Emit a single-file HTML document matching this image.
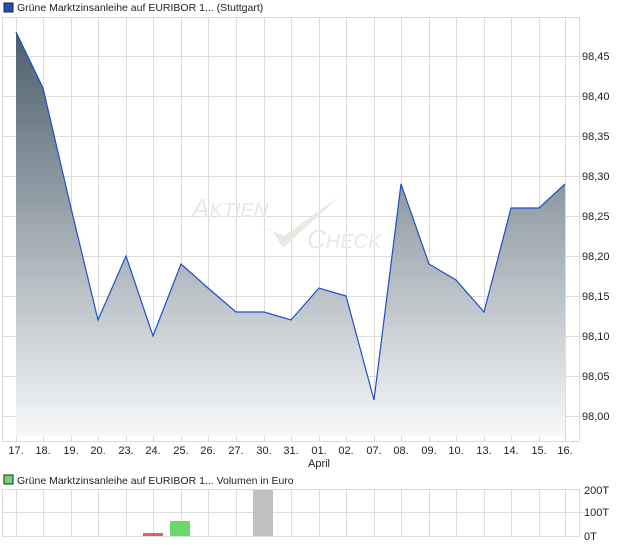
<!DOCTYPE html>
<html><head><meta charset="utf-8"><style>
body{margin:0;width:620px;height:546px;background:#fff;font-family:"Liberation Sans",sans-serif;overflow:hidden}
</style></head><body>
<svg width="620" height="546" xmlns="http://www.w3.org/2000/svg" font-family="Liberation Sans, sans-serif">
<defs><linearGradient id="g" x1="0" y1="32" x2="0" y2="436" gradientUnits="userSpaceOnUse">
<stop offset="0" stop-color="#4b5f6c"/><stop offset="1" stop-color="#f7f8f9"/></linearGradient></defs>
<rect x="4" y="3" width="9" height="9" fill="#1f4fb8" stroke="#222" stroke-width="1"/>
<text x="17" y="11" font-size="10.5" fill="#222">Grüne Marktzinsanleihe auf EURIBOR 1... (Stuttgart)</text>
<g stroke="#dcdcdc" stroke-width="1">
<rect x="2.5" y="17.5" width="577" height="424" fill="#fff"/>
<path d="M16.5 18V441M43.5 18V441M71.5 18V441M98.5 18V441M126.5 18V441M153.5 18V441M181.5 18V441M208.5 18V441M236.5 18V441M264.5 18V441M291.5 18V441M319.5 18V441M346.5 18V441M374.5 18V441M401.5 18V441M429.5 18V441M456.5 18V441M484.5 18V441M511.5 18V441M539.5 18V441M565.5 18V441"/>
<path d="M3 56.5H585M3 96.5H585M3 136.5H585M3 176.5H585M3 216.5H585M3 256.5H585M3 296.5H585M3 336.5H585M3 376.5H585M3 416.5H585"/>
</g>
<g fill="#ebe7e3" font-style="italic" font-size="26">
<text x="192" y="217">A<tspan font-size="20">KTIEN</tspan></text>
<text x="307" y="248">C<tspan font-size="20">HECK</tspan></text>
</g>
<path d="M256 224 L272 230 L283 248 L340 196 L284 236 Z" fill="#ebe7e3"/>
<path d="M16 32 L43 88 L71 208 L98 320 L126 256 L153 336 L181 264 L208 288 L236 312 L264 312 L291 320 L319 288 L346 296 L374 400 L401 184 L429 264 L456 280 L484 312 L511 208 L539 208 L565 184 L565 436 L16 436 Z" fill="url(#g)"/>
<path d="M16 32 L43 88 L71 208 L98 320 L126 256 L153 336 L181 264 L208 288 L236 312 L264 312 L291 320 L319 288 L346 296 L374 400 L401 184 L429 264 L456 280 L484 312 L511 208 L539 208 L565 184" fill="none" stroke="#1f4fc8" stroke-width="1.2"/>
<g font-size="11" fill="#222">
<text x="582" y="60">98,45</text><text x="582" y="100">98,40</text><text x="582" y="140">98,35</text><text x="582" y="180">98,30</text><text x="582" y="220">98,25</text><text x="582" y="260">98,20</text><text x="582" y="300">98,15</text><text x="582" y="340">98,10</text><text x="582" y="380">98,05</text><text x="582" y="420">98,00</text>
</g>
<g font-size="11" fill="#222" text-anchor="middle">
<text x="16" y="454">17.</text><text x="43" y="454">18.</text><text x="71" y="454">19.</text><text x="98" y="454">20.</text><text x="126" y="454">23.</text><text x="153" y="454">24.</text><text x="181" y="454">25.</text><text x="208" y="454">26.</text><text x="236" y="454">27.</text><text x="264" y="454">30.</text><text x="291" y="454">31.</text><text x="319" y="454">01.</text><text x="346" y="454">02.</text><text x="374" y="454">07.</text><text x="401" y="454">08.</text><text x="429" y="454">09.</text><text x="456" y="454">10.</text><text x="484" y="454">13.</text><text x="511" y="454">14.</text><text x="539" y="454">15.</text><text x="565" y="454">16.</text>
<text x="319" y="467">April</text>
</g>
<rect x="4" y="475" width="9" height="9" fill="#6cd86c" stroke="#222" stroke-width="1"/>
<text x="17" y="484" font-size="10.5" fill="#222">Grüne Marktzinsanleihe auf EURIBOR 1... Volumen in Euro</text>
<g stroke="#dcdcdc" stroke-width="1">
<rect x="2.5" y="489.5" width="577" height="47" fill="#fff"/>
<path d="M16.5 490V536M43.5 490V536M71.5 490V536M98.5 490V536M126.5 490V536M153.5 490V536M181.5 490V536M208.5 490V536M236.5 490V536M264.5 490V536M291.5 490V536M319.5 490V536M346.5 490V536M374.5 490V536M401.5 490V536M429.5 490V536M456.5 490V536M484.5 490V536M511.5 490V536M539.5 490V536M565.5 490V536"/>
<path d="M3 512.5H585"/>
</g>
<rect x="143" y="533" width="20" height="3" fill="#d86464"/>
<rect x="170" y="521" width="20" height="15" fill="#6cd86c"/>
<rect x="253" y="490" width="20" height="46" fill="#c0c0c0"/>
<g font-size="11" fill="#222">
<text x="584" y="494">200T</text><text x="584" y="516">100T</text><text x="584" y="540">0T</text>
</g>
</svg>
</body></html>
